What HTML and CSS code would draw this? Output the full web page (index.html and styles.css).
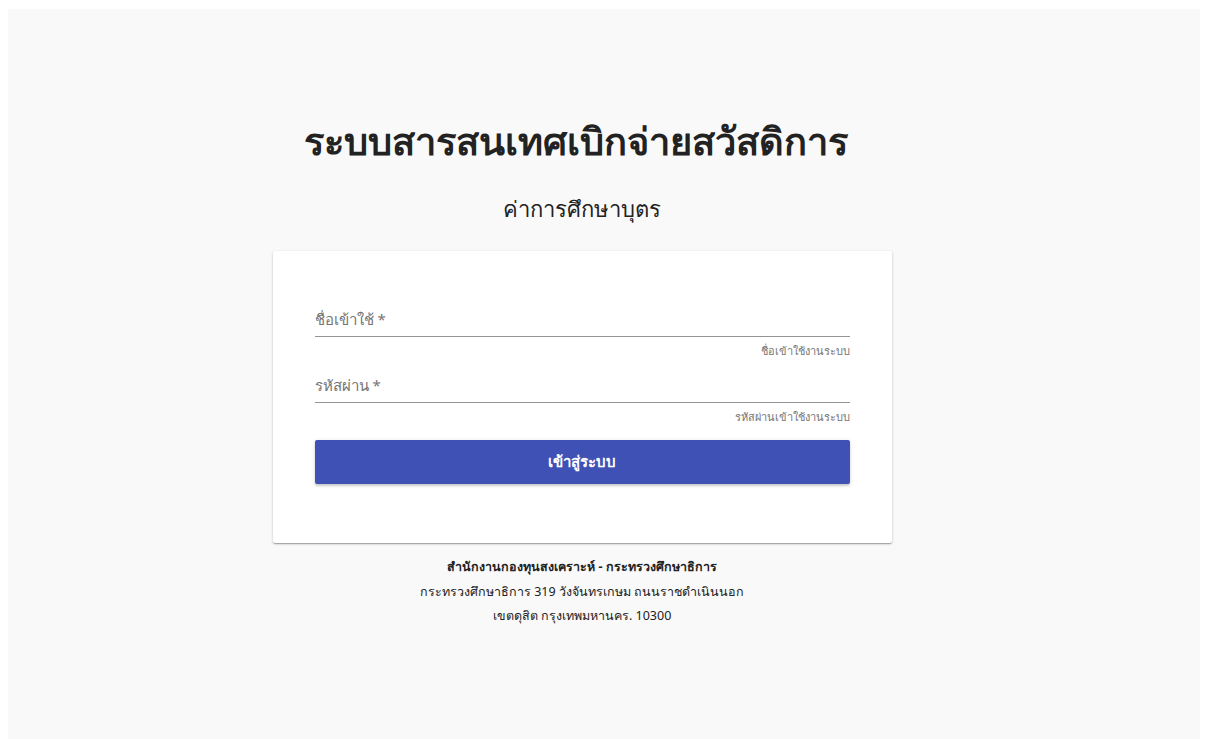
FILE: index.html
```html
<!DOCTYPE html>
<html lang="th">
<head>
<meta charset="utf-8">
<title>ระบบสารสนเทศเบิกจ่ายสวัสดิการ</title>
<link rel="stylesheet" href="styles.css">
</head>
<body>
<div class="page">
  <main class="login">
    <h1 class="title">ระบบสารสนเทศเบิกจ่ายสวัสดิการ</h1>
    <h2 class="subtitle">ค่าการศึกษาบุตร</h2>
    <form class="card">
      <label class="field">
        <span class="field-label">ชื่อเข้าใช้ *</span>
        <span class="field-line"></span>
        <span class="field-hint">ชื่อเข้าใช้งานระบบ</span>
      </label>
      <label class="field">
        <span class="field-label">รหัสผ่าน *</span>
        <span class="field-line"></span>
        <span class="field-hint">รหัสผ่านเข้าใช้งานระบบ</span>
      </label>
      <button type="button" class="btn-login">เข้าสู่ระบบ</button>
    </form>
    <footer class="footer">
      <p class="footer-org">สำนักงานกองทุนสงเคราะห์ - กระทรวงศึกษาธิการ</p>
      <p>กระทรวงศึกษาธิการ 319 วังจันทรเกษม ถนนราชดำเนินนอก</p>
      <p>เขตดุสิต กรุงเทพมหานคร. 10300</p>
    </footer>
  </main>
</div>
</body>
</html>
```

FILE: styles.css
```css
html, body {
  margin: 0;
  padding: 0;
  background: #ffffff;
}

body {
  padding: 9px 8px 0 8px;
  font-family: "Noto Sans", Roboto, "Liberation Sans", sans-serif;
  color: #222;
}

.page {
  background: #f9f9f9;
  min-height: 740px;
  display: flex;
  justify-content: center;
  padding-right: 44px;
  box-sizing: border-box;
}

.login {
  width: 619px;
  display: flex;
  flex-direction: column;
  align-items: center;
  padding-top: 103px;
}

.title {
  margin: 0;
  font-size: 38px;
  font-weight: 700;
  color: #222;
  line-height: 56px;
  white-space: nowrap;
  margin-left: -12px;
}

.subtitle {
  margin: 24px 0 0 0;
  font-size: 22px;
  font-weight: 400;
  color: #222;
  line-height: 32px;
}

.card {
  align-self: stretch;
  margin-top: 27px;
  background: #fff;
  box-shadow: 0 1px 3px rgba(0,0,0,0.2), 0 1px 1px rgba(0,0,0,0.14), 0 2px 1px -1px rgba(0,0,0,0.12);
  border-radius: 2px;
  padding: 57px 42px 59px 42px;
  display: flex;
  flex-direction: column;
}

.field {
  display: flex;
  flex-direction: column;
  margin-bottom: 15px;
}

.field-label {
  font-size: 15px;
  color: #757575;
  line-height: 22px;
  padding-bottom: 6px;
}

.field-line {
  height: 1px;
  background: #949494;
}

.field-hint {
  align-self: flex-end;
  font-size: 11px;
  color: #757575;
  line-height: 16px;
  margin-top: 6px;
}

.btn-login {
  margin-top: 0;
  height: 44px;
  border: none;
  border-radius: 2px;
  background: #3f51b5;
  color: #fff;
  font-family: inherit;
  font-size: 15px;
  font-weight: 700;
  box-shadow: 0 2px 2px rgba(0,0,0,0.14), 0 1px 5px rgba(0,0,0,0.12);
  cursor: pointer;
}

.footer {
  margin-top: 12px;
  text-align: center;
  font-size: 12.5px;
  color: #222;
}

.footer p {
  margin: 0;
  line-height: 24.5px;
}

.footer .footer-org {
  font-weight: 700;
}
```
